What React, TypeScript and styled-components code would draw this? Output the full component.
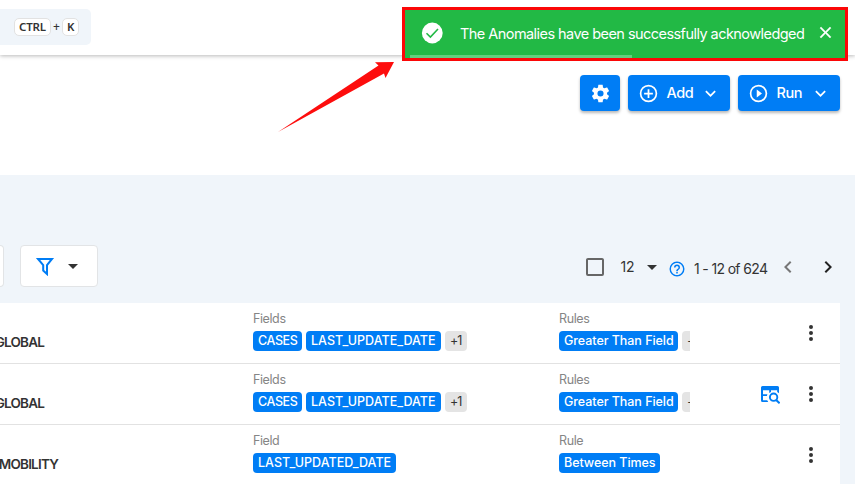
import React from "react";
import styled, { createGlobalStyle } from "styled-components";

const GlobalStyle = createGlobalStyle`
  *, *::before, *::after { box-sizing: border-box; }
  body {
    margin: 0;
    background: #ffffff;
    color: #333333;
    font-family: Inter, "Liberation Sans", sans-serif;
    overflow: hidden;
  }
`;

const paths = {
  cog: "M12,15.5A3.5,3.5 0 0,1 8.5,12A3.5,3.5 0 0,1 12,8.5A3.5,3.5 0 0,1 15.5,12A3.5,3.5 0 0,1 12,15.5M19.43,12.97C19.47,12.65 19.5,12.33 19.5,12C19.5,11.67 19.47,11.34 19.43,11L21.54,9.37C21.73,9.22 21.78,8.95 21.66,8.73L19.66,5.27C19.54,5.05 19.27,4.96 19.05,5.05L16.56,6.05C16.04,5.66 15.5,5.32 14.87,5.07L14.5,2.42C14.46,2.18 14.25,2 14,2H10C9.75,2 9.54,2.18 9.5,2.42L9.13,5.07C8.5,5.32 7.96,5.66 7.44,6.05L4.95,5.05C4.73,4.96 4.46,5.05 4.34,5.27L2.34,8.73C2.21,8.95 2.27,9.22 2.46,9.37L4.57,11C4.53,11.34 4.5,11.67 4.5,12C4.5,12.33 4.53,12.65 4.57,12.97L2.46,14.63C2.27,14.78 2.21,15.05 2.34,15.27L4.34,18.73C4.46,18.95 4.73,19.03 4.95,18.95L7.44,17.94C7.96,18.34 8.5,18.68 9.13,18.93L9.5,21.58C9.54,21.82 9.75,22 10,22H14C14.25,22 14.46,21.82 14.5,21.58L14.87,18.93C15.5,18.67 16.04,18.34 16.56,17.94L19.05,18.95C19.27,19.03 19.54,18.95 19.66,18.73L21.66,15.27C21.78,15.05 21.73,14.78 21.54,14.63L19.43,12.97Z",
  plusCircle: "M12,20C7.59,20 4,16.41 4,12C4,7.59 7.59,4 12,4C16.41,4 20,7.59 20,12C20,16.41 16.41,20 12,20M12,2A10,10 0 0,0 2,12A10,10 0 0,0 12,22A10,10 0 0,0 22,12A10,10 0 0,0 12,2M13,7H11V11H7V13H11V17H13V13H17V11H13V7Z",
  playCircle: "M12,20C7.59,20 4,16.41 4,12C4,7.59 7.59,4 12,4C16.41,4 20,7.59 20,12C20,16.41 16.41,20 12,20M12,2A10,10 0 0,0 2,12A10,10 0 0,0 12,22A10,10 0 0,0 22,12A10,10 0 0,0 12,2M10,16.5L16,12L10,7.5V16.5Z",
  chevronDown: "M7.41,8.58L12,13.17L16.59,8.58L18,10L12,16L6,10L7.41,8.58Z",
  chevronLeft: "M15.41,16.58L10.83,12L15.41,7.41L14,6L8,12L14,18L15.41,16.58Z",
  chevronRight: "M8.59,16.58L13.17,12L8.59,7.41L10,6L16,12L10,18L8.59,16.58Z",
  menuDown: "M7,10L12,15L17,10H7Z",
  close: "M19,6.41L17.59,5L12,10.59L6.41,5L5,6.41L10.59,12L5,17.59L6.41,19L12,13.41L17.59,19L19,17.59L13.41,12L19,6.41Z",
  checkbox: "M19,3H5C3.89,3 3,3.89 3,5V19A2,2 0 0,0 5,21H19A2,2 0 0,0 21,19V5C21,3.89 20.1,3 19,3M19,5V19H5V5H19Z",
  help: "M11,18H13V16H11V18M12,2A10,10 0 0,0 2,12A10,10 0 0,0 12,22A10,10 0 0,0 22,12A10,10 0 0,0 12,2M12,20C7.59,20 4,16.41 4,12C4,7.59 7.59,4 12,4C16.41,4 20,7.59 20,12C20,16.41 16.41,20 12,20M12,6A4,4 0 0,0 8,10H10A2,2 0 0,1 12,8A2,2 0 0,1 14,10C14,12 11,11.75 11,15H13C13,12.75 16,12.5 16,10A4,4 0 0,0 12,6Z",
  dots: "M12,16A2,2 0 0,1 14,18A2,2 0 0,1 12,20A2,2 0 0,1 10,18A2,2 0 0,1 12,16M12,10A2,2 0 0,1 14,12A2,2 0 0,1 12,14A2,2 0 0,1 10,12A2,2 0 0,1 12,10M12,4A2,2 0 0,1 14,6A2,2 0 0,1 12,8A2,2 0 0,1 10,6A2,2 0 0,1 12,4Z",
};

const Svg = styled.svg`
  display: block;
  flex: none;
  fill: currentColor;
`;

function Icon({ name, size = 24 }: { name: keyof typeof paths; size?: number }) {
  return (
    <Svg width={size} height={size} viewBox="0 0 24 24" aria-hidden>
      <path d={paths[name]} />
    </Svg>
  );
}

const Page = styled.div`
  display: flex;
  flex-direction: column;
  width: 855px;
  height: 484px;
  overflow: hidden;
  position: relative;
`;

const TopBar = styled.header`
  height: 55px;
  flex: none;
  padding-top: 9px;
  background: #fff;
  box-shadow: 0 1px 4px rgba(0, 0, 0, 0.28);
`;

const SearchBox = styled.div`
  display: flex;
  align-items: center;
  justify-content: flex-end;
  width: 91px;
  height: 36px;
  padding-right: 12px;
  border-radius: 0 5px 5px 0;
  background: #f0f5fa;
`;

const Key = styled.kbd<{ $w: number }>`
  width: ${(p) => p.$w}px;
  height: 18px;
  border: 1px solid #e2e2e2;
  border-radius: 5px;
  background: #fff;
  font: 600 11.5px/16px "Noto Sans", sans-serif;
  letter-spacing: -0.2px;
  text-align: center;
`;

const KeyPlus = styled.span`
  width: 11px;
  height: 18px;
  font: 500 12px/17px "Noto Sans", sans-serif;
  text-align: center;
`;

const Actions = styled.div`
  display: flex;
  justify-content: flex-end;
  gap: 8px;
  height: 120px;
  flex: none;
  padding: 20px 15px 0 0;
`;

const ActionButton = styled.button<{ $w: number }>`
  display: flex;
  align-items: center;
  width: ${(p) => p.$w}px;
  height: 36px;
  padding: 0 9.5px;
  border: 0;
  border-radius: 4px;
  background: #007df5;
  color: #fff;
  font: 500 14.5px/36px Inter, sans-serif;
  letter-spacing: -0.4px;
  box-shadow: 0 2px 3px rgba(0, 0, 0, 0.28);
`;

const ActionLabel = styled.span`
  flex: 1;
  padding-left: 8px;
  text-align: left;
`;

const Content = styled.main`
  flex: 1;
  background: #f0f5fa;
`;

const Toolbar = styled.div`
  display: flex;
  justify-content: space-between;
  height: 128px;
  padding-top: 70px;
`;

const Filters = styled.div`
  display: flex;
  gap: 16px;
`;

const ClippedBox = styled.div`
  width: 4px;
  height: 42px;
  border: 1px solid #e2e4e6;
  border-left: 0;
  border-radius: 0 4px 4px 0;
  background: #fff;
`;

const FilterButton = styled.button`
  display: flex;
  align-items: center;
  gap: 6px;
  width: 78px;
  height: 42px;
  padding: 0 0 0 14px;
  border: 1px solid #e2e4e6;
  border-radius: 4px;
  background: #fff;
  color: #333;
`;

const FunnelSvg = styled.svg`
  display: block;
  width: 20px;
  height: 20px;
  fill: none;
  stroke: #007df5;
  stroke-width: 2;
`;

const Pager = styled.div`
  display: flex;
  align-items: center;
  height: 44px;
  width: 272px;
  color: #333;
  font-size: 14px;
`;

const SelectAll = styled.span`
  color: #666;
`;

const PageSize = styled.span`
  width: 19.5px;
  margin-left: 13.5px;
  padding-bottom: 1px;
  letter-spacing: -0.3px;
`;

const Help = styled.span`
  margin: 4px 8px 0 4px;
  color: #007df5;
`;

const Range = styled.span`
  width: 81.5px;
  letter-spacing: -0.65px;
  white-space: nowrap;
  padding-top: 2px;
`;

const PageArrow = styled.span<{ $muted?: boolean }>`
  color: ${(p) => (p.$muted ? "#777" : "#222")};
  margin-right: ${(p) => (p.$muted ? 16 : 0)}px;
`;

const List = styled.div`
  width: 840px;
  background: #fff;
`;

const Row = styled.div`
  display: grid;
  grid-template-columns: 253px 306px 131px 69px 1fr;
  height: 61px;
  border-bottom: 1px solid #e2e2e2;
`;

const Source = styled.div<{ $end: number }>`
  display: flex;
  justify-content: flex-end;
  width: ${(p) => p.$end}px;
  padding-top: 29px;
  font-size: 13.5px;
  line-height: 20px;
  font-weight: 600;
  letter-spacing: -0.8px;
  white-space: nowrap;
`;

const Group = styled.div`
  overflow: hidden;
  padding-top: 7px;
`;

const GroupLabel = styled.div`
  height: 21px;
  color: #858585;
  font-size: 12.5px;
  line-height: 18px;
  letter-spacing: -0.4px;
`;

const Chips = styled.div`
  display: flex;
  gap: 4px;
`;

const Chip = styled.span<{ $w: number; $muted?: boolean; $ls?: number }>`
  flex: none;
  width: ${(p) => p.$w}px;
  height: 20px;
  padding-left: 5px;
  border-radius: 4px;
  background: ${(p) => (p.$muted ? "#e4e4e4" : "#007df5")};
  color: ${(p) => (p.$muted ? "#333" : "#fff")};
  font-size: 12.5px;
  font-weight: ${(p) => (p.$muted ? 400 : 500)};
  line-height: 20px;
  letter-spacing: ${(p) => p.$ls ?? 0}px;
  white-space: nowrap;
`;

const RowAction = styled.div`
  display: flex;
  justify-content: flex-end;
  align-items: center;
  color: #007df5;
`;

const RowMenu = styled.div`
  display: flex;
  align-items: center;
  padding-left: 40px;
  color: #333;
`;

const PreviewSlot = styled.div`
  width: 20px;
  height: 20px;
  margin-right: -21px;
  margin-top: 3px;
`;

const Toast = styled.div`
  position: absolute;
  left: 402px;
  top: 7px;
  display: flex;
  align-items: center;
  width: 446px;
  height: 54px;
  padding: 0 10px 3px 15px;
  border: 3px solid #fb0707;
  background: #22b945;
  color: #fff;
`;

const ToastText = styled.span`
  flex: 1;
  padding: 2px 0 0 16px;
  font-size: 14.5px;
  letter-spacing: -0.55px;
  white-space: nowrap;
`;

const ToastClose = styled.span`
  stroke: currentColor;
  stroke-width: 0.5;
`;

const ToastProgress = styled.div`
  position: absolute;
  left: 5px;
  bottom: 0;
  width: 222px;
  height: 3px;
  background: #64ce7d;
`;

const Arrow = styled.svg`
  position: absolute;
  left: 270px;
  top: 55px;
`;

type ChipData = { text: string; w: number; ls?: number; muted?: boolean };
type RowData = {
  source: string;
  end: number;
  fieldLabel: string;
  fields: ChipData[];
  ruleLabel: string;
  rules: ChipData[];
  preview?: boolean;
};

const more: ChipData = { text: "+1", w: 22, ls: -0.9, muted: true };
const pair = {
  source: "GLOBAL",
  end: 44,
  fieldLabel: "Fields",
  fields: [
    { text: "CASES", w: 49, ls: -0.4 },
    { text: "LAST_UPDATE_DATE", w: 135, ls: 0.02 },
    more,
  ],
  ruleLabel: "Rules",
  rules: [{ text: "Greater Than Field", w: 119, ls: -0.05 }, more],
};

const rows: RowData[] = [
  pair,
  { ...pair, preview: true },
  {
    source: "MOBILITY",
    end: 58,
    fieldLabel: "Field",
    fields: [{ text: "LAST_UPDATED_DATE", w: 143, ls: 0.02 }],
    ruleLabel: "Rule",
    rules: [{ text: "Between Times", w: 101, ls: -0.05 }],
  },
];

function ChipGroup({ label, items }: { label: string; items: ChipData[] }) {
  return (
    <Group>
      <GroupLabel>{label}</GroupLabel>
      <Chips>
        {items.map((c) => (
          <Chip key={c.text} $w={c.w} $muted={c.muted} $ls={c.ls}>
            {c.text}
          </Chip>
        ))}
      </Chips>
    </Group>
  );
}

function TableSearch() {
  return (
    <Svg width="20" height="20" viewBox="0 0 20 20" aria-hidden>
      <path d="M2.5 0H17.5Q19 0 19 1.5V7.2L17.2 6V4.2H11V6L9.2 7V4.2H3V8.2H7.4L6.9 10H3V14.2H7.2L8.2 16H2.5Q1 16 1 14.5V1.5Q1 0 2.5 0Z" />
      <circle cx="13.6" cy="11.2" r="3.7" fill="none" stroke="currentColor" strokeWidth="1.9" />
      <path d="M16.2 13.9L19.6 17.3" fill="none" stroke="currentColor" strokeWidth="2.1" />
    </Svg>
  );
}

export default function App() {
  return (
    <Page>
      <GlobalStyle />
      <TopBar>
        <SearchBox>
          <Key $w={37}>CTRL</Key>
          <KeyPlus>+</KeyPlus>
          <Key $w={17}>K</Key>
        </SearchBox>
      </TopBar>

      <Actions>
        <ActionButton $w={40}>
          <Icon name="cog" size={21} />
        </ActionButton>
        <ActionButton $w={102}>
          <Icon name="plusCircle" size={21} />
          <ActionLabel>Add</ActionLabel>
          <Icon name="chevronDown" size={21} />
        </ActionButton>
        <ActionButton $w={102}>
          <Icon name="playCircle" size={21} />
          <ActionLabel>Run</ActionLabel>
          <Icon name="chevronDown" size={21} />
        </ActionButton>
      </Actions>

      <Content>
        <Toolbar>
          <Filters>
            <ClippedBox />
            <FilterButton>
              <FunnelSvg viewBox="0 0 20 20">
                <path d="M3 3H17L12 9.2V18L8.2 14.5V9.2Z" />
              </FunnelSvg>
              <Icon name="menuDown" />
            </FilterButton>
          </Filters>
          <Pager>
            <SelectAll>
              <Icon name="checkbox" />
            </SelectAll>
            <PageSize>12</PageSize>
            <Icon name="menuDown" />
            <Help>
              <Icon name="help" size={18} />
            </Help>
            <Range>1 - 12 of 624</Range>
            <PageArrow $muted>
              <Icon name="chevronLeft" />
            </PageArrow>
            <PageArrow>
              <Icon name="chevronRight" />
            </PageArrow>
          </Pager>
        </Toolbar>

        <List>
          {rows.map((r, i) => (
            <Row key={i}>
              <Source $end={r.end}>{r.source}</Source>
              <ChipGroup label={r.fieldLabel} items={r.fields} />
              <ChipGroup label={r.ruleLabel} items={r.rules} />
              <RowAction>
                {r.preview && (
                  <PreviewSlot>
                    <TableSearch />
                  </PreviewSlot>
                )}
              </RowAction>
              <RowMenu>
                <Icon name="dots" />
              </RowMenu>
            </Row>
          ))}
        </List>
      </Content>

      <Toast>
        <Svg width="24" height="24" viewBox="0 0 24 24" aria-hidden>
          <circle cx="12.3" cy="12" r="10.4" />
          <path d="M6.5 12.2L10.4 16L18 8" fill="none" stroke="#22b945" strokeWidth="1.6" />
        </Svg>
        <ToastText>The Anomalies have been successfully acknowledged</ToastText>
        <ToastClose>
          <Icon name="close" size={19} />
        </ToastClose>
        <ToastProgress />
      </Toast>

      <Arrow width="130" height="80" viewBox="0 0 130 80" aria-hidden>
        <path d="M8 77L108.5 10.5L105 7.2L124 7L115.5 23L114 18.5Z" fill="#fd0d0d" />
      </Arrow>
    </Page>
  );
}
